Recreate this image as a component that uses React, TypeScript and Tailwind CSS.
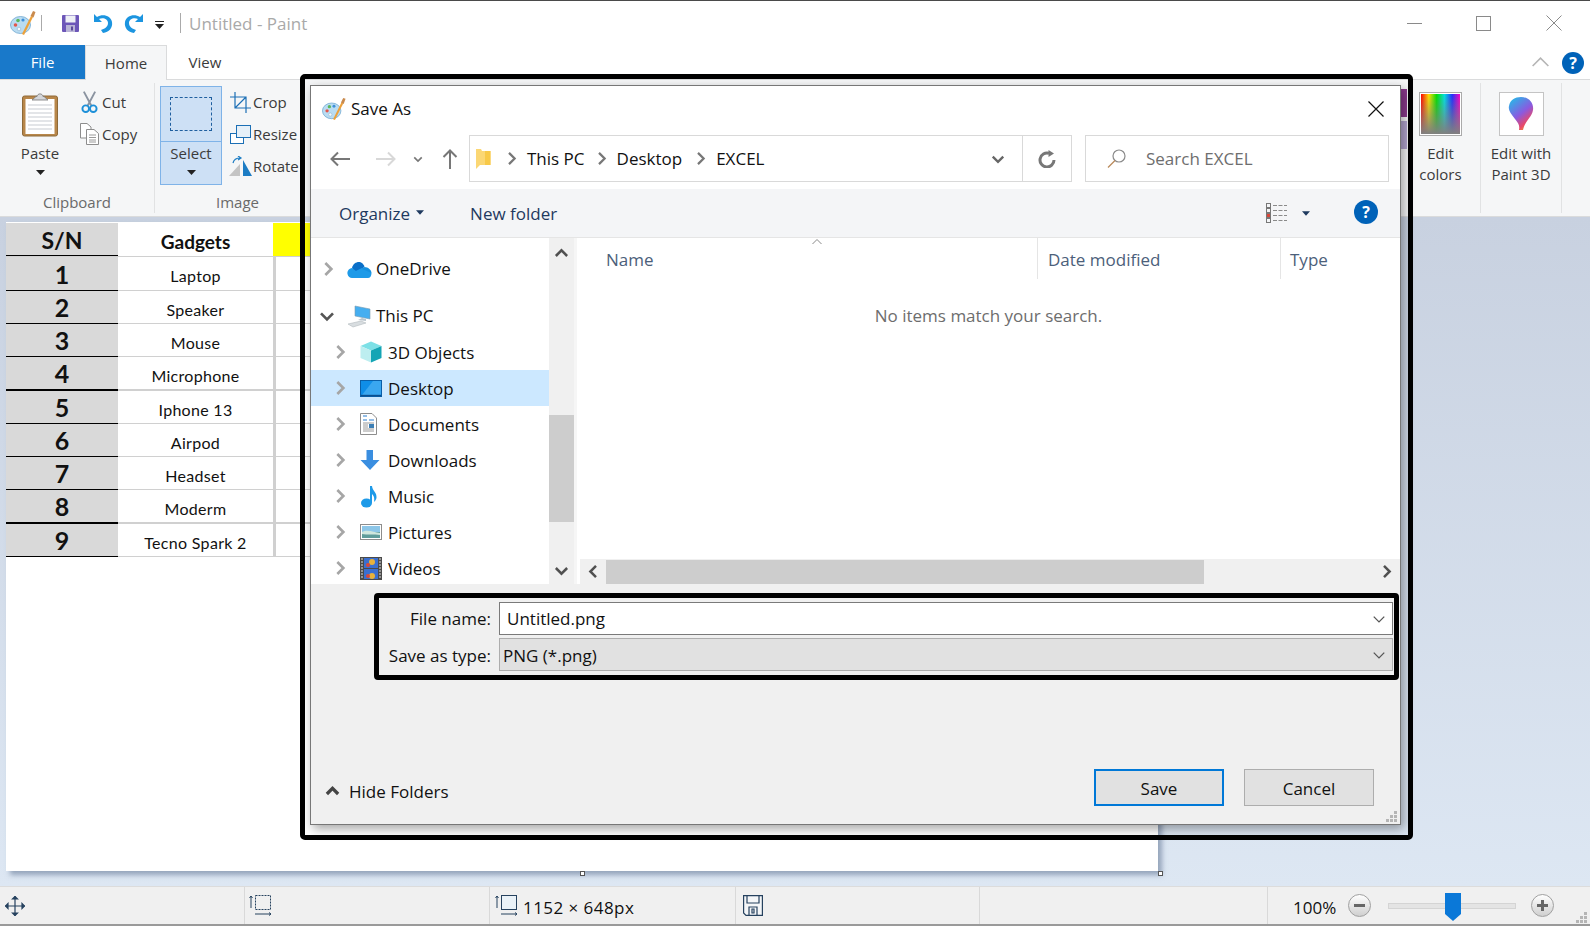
import React from "react";

const Chevron = ({ dir, size = 12, color = "#a6a6a6", width = 2.4 }: { dir: "left" | "right" | "up" | "down"; size?: number; color?: string; width?: number }) => {
  const paths = {
    right: "M4 1.5 L8.5 6 L4 10.5",
    left: "M8 1.5 L3.5 6 L8 10.5",
    up: "M1.5 8 L6 3.5 L10.5 8",
    down: "M1.5 4 L6 8.5 L10.5 4",
  };
  return (
    <svg width={size} height={size} viewBox="0 0 12 12" fill="none" className="shrink-0">
      <path d={paths[dir]} stroke={color} strokeWidth={width} />
    </svg>
  );
};

const Caret = ({ color = "#222", w = 9 }: { color?: string; w?: number }) => (
  <svg width={w} height={5} viewBox="0 0 9 5" className="shrink-0">
    <path d="M0 0 H9 L4.5 5 Z" fill={color} />
  </svg>
);

const Palette = ({ size = 26 }: { size?: number }) => (
  <svg width={size} height={size} viewBox="0 0 26 26" className="shrink-0">
    <ellipse cx="10.5" cy="15" rx="10" ry="8.5" fill="#b9dcf2" stroke="#6ea7cf" strokeWidth="0.8" />
    <circle cx="5.5" cy="15" r="1.8" fill="#e2574c" />
    <circle cx="8" cy="10.5" r="1.8" fill="#5bb85b" />
    <circle cx="13" cy="10" r="1.6" fill="#3e8fd8" />
    <circle cx="9" cy="19" r="1.8" fill="#f4f9fc" stroke="#8fb4cf" strokeWidth="0.6" />
    <path d="M12 24 L21 6 L23 7 L14 25 Z" fill="#eda13a" />
    <path d="M20.5 6 L23 1 L25.5 2 L23.5 7.5 Z" fill="#c98a4d" />
  </svg>
);

const RowIcon3D = () => (
  <svg width="22" height="22" viewBox="0 0 22 22">
    <path d="M11 0.5 L21.5 5 L11 9.5 L0.5 5 Z" fill="#7de0e6" />
    <path d="M0.5 5 L11 9.5 V21.5 L0.5 17 Z" fill="#bdeef0" />
    <path d="M21.5 5 L11 9.5 V21.5 L21.5 17 Z" fill="#14a5b5" />
  </svg>
);

const DesktopIcon = () => (
  <svg width="22" height="17" viewBox="0 0 22 17">
    <rect x="0.5" y="0.5" width="21" height="16" fill="#0f8ee8" stroke="#0a5fa8" />
    <path d="M2 15 L13 1 H21 V15 Z" fill="#3aa7f0" />
    <rect x="1" y="14.8" width="20" height="1.4" fill="#0a4f90" />
  </svg>
);

const DocIcon = () => (
  <svg width="17" height="22" viewBox="0 0 17 22">
    <path d="M0.5 0.5 H12 L16.5 5 V21.5 H0.5 Z" fill="#fff" stroke="#8d8d8d" />
    <path d="M3 3 H7 M3 7 H7 M9 7 H14" stroke="#2a7fd0" strokeWidth="1.2" />
    <path d="M3 10 H14 M3 12 H8 M3 14 H8 M3 16 H14 M3 18 H14" stroke="#9a9a9a" strokeWidth="1" />
    <rect x="9" y="11" width="5" height="4" fill="#3d7fb5" />
  </svg>
);

const DownloadIcon = () => (
  <svg width="20" height="20" viewBox="0 0 20 20">
    <path d="M6.5 0 H13 V10 H19.5 L10 20 L0.5 10 H6.5 Z" fill="#3a8ee0" />
  </svg>
);

const MusicIcon = () => (
  <svg width="18" height="23" viewBox="0 0 18 23">
    <ellipse cx="6.5" cy="18" rx="5.5" ry="4.5" fill="#1e9ae8" />
    <path d="M10 1 H12 C12.5 6 17 7 16.5 13 C16 15 15 16 14 17 C15 12 13 10 12 9 V18 H10 Z" fill="#1e9ae8" />
  </svg>
);

const PicturesIcon = () => (
  <svg width="22" height="16" viewBox="0 0 22 16">
    <rect x="0.5" y="0.5" width="21" height="15" fill="#fff" stroke="#8d8d8d" />
    <rect x="2" y="2" width="18" height="6" fill="#8cc6e8" />
    <rect x="2" y="8" width="18" height="6" fill="#5f9c9a" />
    <path d="M2 8 C7 5 14 8 20 9 V11 C14 10 7 11 2 10 Z" fill="#cfe6dd" />
  </svg>
);

const VideosIcon = () => (
  <svg width="22" height="23" viewBox="0 0 22 23">
    <rect width="22" height="23" fill="#4a4a4a" />
    <rect x="4" y="1" width="14" height="10" fill="#3a6fd0" />
    <rect x="4" y="12" width="14" height="10" fill="#3a6fd0" />
    <circle cx="12" cy="5" r="3" fill="#e8b23a" />
    <circle cx="8" cy="8" r="2" fill="#d8473a" />
    <circle cx="12" cy="19" r="3" fill="#e8b23a" />
    <circle cx="8" cy="19" r="2" fill="#d8473a" />
    <path d="M1 2 H3 M1 5 H3 M1 8 H3 M1 11 H3 M1 14 H3 M1 17 H3 M1 20 H3 M19 2 H21 M19 5 H21 M19 8 H21 M19 11 H21 M19 14 H21 M19 17 H21 M19 20 H21" stroke="#ddd" strokeWidth="1.2" />
  </svg>
);

const OneDriveIcon = () => (
  <svg width="25" height="17" viewBox="0 0 25 17">
    <path d="M5 7 C6 2 11 0 14 1.5 C16 2.5 17 4 17.5 6 L8 12 Z" fill="#0a6fc8" />
    <path d="M17.5 6 C21 6 24.5 9 24.5 12 L13 14 L9 10 Z" fill="#1590df" />
    <path d="M5 7 C2 7.5 0 10 0.5 13 C1 15.5 3 17 5 17 H21 C23 17 24.5 15 24.5 12 L14 7.5 L9 10 Z" fill="#1e9ae8" />
  </svg>
);

const ThisPcIcon = () => (
  <svg width="24" height="23" viewBox="0 0 24 23">
    <path d="M8 1 L23 4 V14 L8 11 Z" fill="#45aef0" stroke="#7c9cb0" strokeWidth="0.6" />
    <path d="M15 13 L19 14 V16 L11 15 Z" fill="#b9c4cc" />
    <path d="M1 19 L14 16 L19 18 L6 22 Z" fill="#d8dde0" stroke="#a8b0b5" strokeWidth="0.5" />
  </svg>
);

const NavRow = ({ icon, label, active }: { icon: React.ReactNode; label: string; active?: boolean }) => (
  <div className={`flex h-[36px] items-center shrink-0 ${active ? "bg-[#cce8ff]" : ""}`}>
    <div className="ml-[21px] w-[28px] flex justify-start">
      <Chevron dir="right" size={16} width={2} />
    </div>
    <div className="w-[28px] flex justify-start">{icon}</div>
    <span className="mt-[1px]">{label}</span>
  </div>
);

const gadgets: [string, string, number, number][] = [
  ["1", "Laptop", 34, 1],
  ["2", "Speaker", 33, 1],
  ["3", "Mouse", 33, 1],
  ["4", "Microphone", 34, 2],
  ["5", "Iphone 13", 33, 1],
  ["6", "Airpod", 33, 1],
  ["7", "Headset", 33, 1],
  ["8", "Moderm", 34, 2],
  ["9", "Tecno Spark 2", 33, 1],
];

const Handle = ({ className }: { className: string }) => (
  <div className={`absolute w-[5px] h-[5px] bg-white border border-[#555] ${className}`} />
);

const SmallCmd = ({ icon, label }: { icon: React.ReactNode; label: string }) => (
  <div className="flex items-center h-[32px]">
    <div className="w-[26px] flex justify-center">{icon}</div>
    <span>{label}</span>
  </div>
);

export default function App() {
  return (
    <div className="relative w-[1590px] h-[926px] overflow-hidden bg-white flex flex-col font-['Open_Sans',sans-serif] text-[#111] text-[17px]">
      {/* title bar */}
      <div className="h-[45px] shrink-0 border-t border-[#4a4a4a] flex items-center">
        <div className="ml-[10px]"><Palette /></div>
        <div className="ml-[5px] w-px h-[16px] bg-[#aaa]" />
        <svg className="ml-[20px]" width="17" height="17" viewBox="0 0 17 17">
          <rect width="17" height="17" rx="1" fill="#6c56b8" />
          <rect x="3.5" y="0.5" width="10" height="7" fill="#eef0f6" />
          <rect x="4" y="10" width="9" height="7" fill="#b9b4d6" />
          <rect x="9" y="11.5" width="2" height="4" fill="#5a4a9a" />
        </svg>
        <svg className="ml-[14px]" width="20" height="21" viewBox="0 0 20 21">
          <path d="M1 1 V9 H9 L6 6 C10 4 15 6 15 10 C15 14 11 16 8 17 L10 20 C16 19 20 15 19 9 C18 3 10 0 4 4 Z" fill="#1c95e0" />
        </svg>
        <svg className="ml-[11px]" width="20" height="21" viewBox="0 0 20 21">
          <path d="M19 1 V9 H11 L14 6 C10 4 5 6 5 10 C5 14 9 16 12 17 L10 20 C4 19 0 15 1 9 C2 3 10 0 16 4 Z" fill="#1c95e0" />
        </svg>
        <div className="ml-[11px] flex flex-col items-center gap-[2px] mt-[4px]">
          <div className="w-[9px] h-px bg-[#222]" />
          <Caret />
        </div>
        <div className="ml-[16px] w-px h-[20px] bg-[#aaa]" />
        <span className="ml-[8px] mt-[1px] text-[#a9a9a9]">Untitled - Paint</span>
        <div className="ml-auto flex items-center">
          <div className="w-[15px] h-px bg-[#8a8a8a] mr-[54px]" />
          <div className="w-[15px] h-[15px] border border-[#8a8a8a] mr-[55px]" />
          <svg className="mr-[28px]" width="16" height="16" viewBox="0 0 16 16">
            <path d="M0.5 0.5 L15.5 15.5 M15.5 0.5 L0.5 15.5" stroke="#8a8a8a" />
          </svg>
        </div>
      </div>

      {/* tabs */}
      <div className="h-[35px] shrink-0 flex relative text-[15px]">
        <div className="w-[85px] h-[34px] bg-[#1979ca] text-white flex items-center justify-center">File</div>
        <div className="w-[82px] h-[35px] bg-[#f5f6f7] border border-b-0 border-[#dadbdc] flex items-center justify-center z-10 text-[#3b3b3b]">Home</div>
        <div className="w-[76px] flex items-center justify-center text-[#3b3b3b]">View</div>
        <div className="ml-auto flex items-center mr-[6px] gap-[11px]">
          <Chevron dir="up" size={21} color="#b5b5b5" width={0.9} />
          <div className="w-[22px] h-[22px] rounded-full bg-[#0062b8] text-white font-bold flex items-center justify-center text-[16px]">?</div>
        </div>
        <div className="absolute left-0 right-0 bottom-0 h-px bg-[#dadbdc]" />
      </div>

      {/* ribbon */}
      <div className="h-[137px] shrink-0 bg-[#f5f6f7] border-b border-[#dadbdc] py-[3px] flex text-[15px] text-[#3b3b3b]">
        <div className="w-[155px] border-r border-[#e1e2e3] flex flex-col">
          <div className="flex flex-1">
            <div className="w-[80px] flex flex-col items-center pt-[10px]">
              <svg width="36" height="44" viewBox="0 0 36 44">
                <rect x="0.5" y="3" width="35" height="40" rx="2" fill="#b8874a" stroke="#8f6a38" />
                <rect x="3.5" y="6" width="29" height="35" fill="#fff" />
                <path d="M6 12 H30 M6 16 H30 M6 20 H30 M6 24 H30 M6 28 H30 M6 32 H30 M6 36 H30" stroke="#c8ccd2" strokeWidth="1.2" />
                <path d="M10 7 L14 3.5 H15 C15.5 0 20.5 0 21 3.5 H22 L26 7 Z" fill="#d4d6da" stroke="#777" strokeWidth="0.8" />
              </svg>
              <span className="mt-[6px] leading-[20px]">Paste</span>
              <div className="mt-[7px]"><Caret /></div>
            </div>
            <div className="pt-[3px] ml-[-4px]">
              <SmallCmd
                icon={
                  <svg width="17" height="23" viewBox="0 0 18 23">
                    <path d="M3 0 L11 15 M15 0 L7 15" stroke="#8a93a0" strokeWidth="2" />
                    <circle cx="5" cy="18" r="3.5" fill="none" stroke="#1c8fd8" strokeWidth="2" />
                    <circle cx="13" cy="18" r="3.5" fill="none" stroke="#1c8fd8" strokeWidth="2" />
                  </svg>
                }
                label="Cut"
              />
              <SmallCmd
                icon={
                  <svg width="19" height="22" viewBox="0 0 19 22">
                    <path d="M0.5 0.5 H7 L11 4 V15 H0.5 Z" fill="#fff" stroke="#8d8d8d" />
                    <path d="M6.5 6.5 H14 L18.5 10.5 V21.5 H6.5 Z" fill="#fff" stroke="#8d8d8d" />
                    <path d="M9 12 H16 M9 14.5 H16 M9 17 H16 M9 19 H16" stroke="#9a9a9a" />
                  </svg>
                }
                label="Copy"
              />
            </div>
          </div>
          <div className="h-[26px] pt-[5px] text-center text-[#6a6a6a] leading-[21px]">Clipboard</div>
        </div>
        <div className="w-[165px] flex flex-col">
          <div className="flex flex-1">
            <div className="ml-[5px] mt-[3px] w-[62px] h-[99px] bg-[#cde0f5] border border-[#7fb3e8] flex flex-col">
              <div className="h-[55px] border-b border-[#7fb3e8] flex items-center justify-center">
                <div className="w-[42px] h-[34px] border border-dashed border-[#1f5f9f]" />
              </div>
              <div className="flex flex-col items-center">
                <span className="leading-[20px] mt-[1px]">Select</span>
                <div className="mt-[7px]"><Caret /></div>
              </div>
            </div>
            <div className="pt-[3px] ml-[5px]">
              <SmallCmd
                icon={
                  <svg width="21" height="21" viewBox="0 0 21 21" fill="none" stroke="#1c6fb5" strokeWidth="1.2">
                    <path d="M5 0 V16 H21 M0 5 H16 V21 M5 16 L16 5" />
                  </svg>
                }
                label="Crop"
              />
              <SmallCmd
                icon={
                  <svg width="21" height="19" viewBox="0 0 21 19">
                    <rect x="0.5" y="8.5" width="13" height="10" fill="#fff" stroke="#1c6fb5" />
                    <rect x="6.5" y="0.5" width="14" height="12" fill="#e6f0f8" stroke="#1c6fb5" />
                  </svg>
                }
                label="Resize"
              />
              <SmallCmd
                icon={
                  <svg width="23" height="21" viewBox="0 0 23 21">
                    <path d="M14 4 L23 20 H14 Z" fill="#1c7cc4" />
                    <path d="M11 8 V20 H0 Z" fill="#c4c4c4" />
                    <path d="M4 7 C5 3 8 2 11 2 M9 0 L12 2 L9 4" fill="none" stroke="#1c7cc4" strokeWidth="1.2" />
                  </svg>
                }
                label="Rotate"
              />
            </div>
          </div>
          <div className="h-[26px] pt-[5px] text-[#6a6a6a] leading-[21px] pl-[61px]">Image</div>
        </div>
        {/* right end of the ribbon */}
        <div className="ml-auto flex">
          <div className="w-[8px] mr-[12px] pt-[6px] flex flex-col gap-[4px]">
            <div className="h-[28px] bg-[#8a3a8c]" />
            <div className="h-[28px] bg-[#b3a6cf]" />
          </div>
          <div className="w-[62px] border-r border-[#e1e2e3] flex flex-col items-center pt-[9px] leading-[21px] text-center">
            <svg className="self-start" width="43" height="44" viewBox="0 0 43 44">
              <defs>
                <linearGradient id="hue" x1="0" x2="1" y1="0" y2="0">
                  <stop offset="0" stopColor="#ff0000" />
                  <stop offset="0.2" stopColor="#ffe000" />
                  <stop offset="0.4" stopColor="#00e000" />
                  <stop offset="0.6" stopColor="#00e0e0" />
                  <stop offset="0.8" stopColor="#2030ff" />
                  <stop offset="1" stopColor="#ff00c0" />
                </linearGradient>
                <linearGradient id="fade" x1="0" x2="0" y1="0" y2="1">
                  <stop offset="0" stopColor="#808080" stopOpacity="0" />
                  <stop offset="1" stopColor="#808080" stopOpacity="1" />
                </linearGradient>
              </defs>
              <rect x="0.5" y="0.5" width="42" height="43" fill="#fff" stroke="#aaa" />
              <rect x="2" y="2" width="39" height="40" fill="url(#hue)" />
              <rect x="2" y="2" width="39" height="40" fill="url(#fade)" />
            </svg>
            <span className="mt-[7px] self-start w-[43px]">Edit colors</span>
          </div>
          <div className="w-[81px] border-r border-[#e1e2e3] flex flex-col items-center pt-[9px] leading-[21px] text-center">
            <svg width="45" height="44" viewBox="0 0 45 44">
              <defs>
                <linearGradient id="ball" x1="0.2" x2="0.8" y1="0" y2="1">
                  <stop offset="0" stopColor="#29b6e8" />
                  <stop offset="0.5" stopColor="#8a5ae0" />
                  <stop offset="0.8" stopColor="#e8486a" />
                  <stop offset="1" stopColor="#f5a623" />
                </linearGradient>
              </defs>
              <rect x="0.5" y="0.5" width="44" height="43" fill="#fff" stroke="#c4c4c4" />
              <path d="M22 5 C30 5 35 11 34 18 C33 25 26 29 24 38 L20 38 C21 33 19 31 16 27 C12 22 9 18 10 14 C11 8 16 5 22 5 Z" fill="url(#ball)" />
            </svg>
            <span className="mt-[7px]">Edit with Paint 3D</span>
          </div>
          <div className="w-[28px]" />
        </div>
      </div>

      {/* canvas area */}
      <div className="relative flex-1 bg-gradient-to-b from-[#c8d1e0] to-[#dde7f3] pl-[6px] pt-[5px]">
        <div className="relative w-[1152px] h-[649px] bg-white shadow-[4px_4px_5px_rgba(100,120,150,0.6)] pt-[1px]">
          <div className="flex h-[34px] border-b border-[#d0d0d0]">
            <div className="w-[112px] bg-[#d9d9d9] border-b border-black text-[23px] font-bold font-['Lato',sans-serif] flex items-center justify-center pt-[3px]">S/N</div>
            <div className="w-[155px] text-[19px] font-bold font-['Lato',sans-serif] flex items-center justify-center pt-[5px]">Gadgets</div>
            <div className="w-[45px] bg-[#ffff00]" />
          </div>
          {gadgets.map(([n, name, h, b]) => (
            <div key={n} className="flex" style={{ height: h }}>
              <div className={`w-[112px] bg-[#d9d9d9] border-black text-[25px] font-bold font-['Lato',sans-serif] flex items-center justify-center pt-[2px] ${b === 2 ? "border-b-2" : "border-b"}`}>{n}</div>
              <div className={`w-[155px] border-[#d0d0d0] text-[16px] tracking-[0.3px] font-['Lato',sans-serif] flex items-center justify-center pt-[5px] ${b === 2 ? "border-b-2" : "border-b"}`}>{name}</div>
              <div className={`w-[45px] border-l-[3px] border-[#d0d0d0] ${b === 2 ? "border-b-2" : "border-b"}`} />
            </div>
          ))}
          <Handle className="left-[574px] bottom-[-5px]" />
          <Handle className="right-[-5px] bottom-[-5px]" />
        </div>
      </div>

      {/* status bar */}
      <div className="h-[40px] shrink-0 bg-[#f0f0f0] border-t border-[#dcdcdc] border-b-2 border-b-[#9a9a9a] flex text-[17px]">
        <div className="w-[245px] border-r border-[#d9d9d9] flex items-center pl-[5px]">
          <svg width="20" height="20" viewBox="0 0 20 20" fill="none" stroke="#26425f" strokeWidth="1.2">
            <path d="M10 0 V20 M0 10 H20" />
            <path d="M7.5 3 L10 0.5 L12.5 3 Z M7.5 17 L10 19.5 L12.5 17 Z M3 7.5 L0.5 10 L3 12.5 Z M17 7.5 L19.5 10 L17 12.5 Z" fill="#26425f" />
          </svg>
        </div>
        <div className="w-[245px] border-r border-[#d9d9d9] flex items-center pl-[4px]">
          <svg width="23" height="21" viewBox="0 0 23 21" fill="none" stroke="#26425f">
            <rect x="6.5" y="0.5" width="15" height="14" strokeDasharray="2 1" />
            <path d="M2 1 V13 M0.5 3 L2 1 L3.5 3 M6 19 H22 M20 17.5 L22 19 L20 20.5" />
          </svg>
        </div>
        <div className="w-[246px] border-r border-[#d9d9d9] flex items-center pl-[5px]">
          <svg width="23" height="21" viewBox="0 0 23 21" fill="none" stroke="#26425f">
            <rect x="6.5" y="0.5" width="15" height="14" fill="#eaf2f8" />
            <path d="M2 1 V13 M0.5 3 L2 1 L3.5 3 M6 19 H22 M20 17.5 L22 19 L20 20.5" />
          </svg>
          <span className="ml-[5px] mt-[4px] tracking-[0.45px]">1152 × 648px</span>
        </div>
        <div className="w-[244px] border-r border-[#d9d9d9] flex items-center pl-[7px]">
          <svg width="20" height="21" viewBox="0 0 20 21" fill="none" stroke="#26425f" strokeWidth="1.2">
            <path d="M0.6 0.6 H19.4 V20.4 H3 L0.6 18 Z" fill="#f4f6f8" />
            <path d="M4 0.6 V8 H16 V0.6 M6 20.4 V12 H14 V20.4 M9 14 H11 V18 H9 Z" />
          </svg>
        </div>
        <div className="w-[288px] border-r border-[#d9d9d9]" />
        <div className="flex-1 flex items-center relative">
          <span className="ml-[25px] mt-[4px]">100%</span>
          <div className="ml-[12px] w-[23px] h-[23px] rounded-full border border-[#a0a0a0] bg-gradient-to-b from-white to-[#cfcfcf] flex items-center justify-center">
            <div className="w-[11px] h-[3px] bg-[#666]" />
          </div>
          <div className="relative ml-[17px] w-[128px] h-[6px] bg-[#e4e4e4] border border-[#d4d4d4]">
            <svg className="absolute left-[56px] top-[-11px]" width="16" height="28" viewBox="0 0 16 28">
              <path d="M0 0 H16 V21 L8 28 L0 21 Z" fill="#0a78d8" />
            </svg>
          </div>
          <div className="ml-[15px] w-[23px] h-[23px] rounded-full border border-[#a0a0a0] bg-gradient-to-b from-white to-[#cfcfcf] flex items-center justify-center relative">
            <div className="w-[11px] h-[3px] bg-[#666]" />
            <div className="absolute w-[3px] h-[11px] bg-[#666]" />
          </div>
          <svg className="absolute right-[2px] bottom-0" width="12" height="12" viewBox="0 0 12 12" fill="#b5b5b5">
            <path d="M8 0h3v3H8zM4 4h3v3H4zM8 4h3v3H8zM0 8h3v3H0zM4 8h3v3H4zM8 8h3v3H8z" />
          </svg>
        </div>
      </div>

      {/* Save As dialog with its black marker outline */}
      <div className="absolute left-[300px] top-[74px] w-[1113px] h-[766px] border-[5px] border-black rounded-[5px] pl-[5px] pt-[6px] pr-[7px] pb-[10px]">
        <div className="w-full h-full border border-[#777] bg-white shadow-[3px_4px_10px_rgba(0,0,0,0.35)] flex flex-col relative">
          <div className="h-[49px] shrink-0 flex items-center pb-[4px]">
            <div className="ml-[11px]"><Palette size={24} /></div>
            <span className="ml-[5px]">Save As</span>
            <svg className="ml-auto mr-[16px]" width="16" height="16" viewBox="0 0 16 16">
              <path d="M0.5 0.5 L15.5 15.5 M15.5 0.5 L0.5 15.5" stroke="#111" strokeWidth="1.2" />
            </svg>
          </div>

          <div className="h-[54px] shrink-0 flex items-start">
            <div className="w-[158px] shrink-0 h-[47px] flex items-center">
              <svg className="ml-[19px]" width="20" height="16" viewBox="0 0 20 16" fill="none" stroke="#777" strokeWidth="2">
                <path d="M20 8 H2 M8 1.5 L1.5 8 L8 14.5" />
              </svg>
              <svg className="ml-[26px]" width="20" height="16" viewBox="0 0 20 16" fill="none" stroke="#d8d8d8" strokeWidth="2">
                <path d="M0 8 H18 M12 1.5 L18.5 8 L12 14.5" />
              </svg>
              <div className="ml-[17px]"><Chevron dir="down" size={10} color="#777" width={2} /></div>
              <svg className="ml-[19px]" width="16" height="20" viewBox="0 0 16 20" fill="none" stroke="#777" strokeWidth="2">
                <path d="M8 20 V2 M1.5 8 L8 1.5 L14.5 8" />
              </svg>
            </div>
            <div className="w-[554px] shrink-0 h-[47px] border border-[#d9d9d9] flex items-center relative">
              <svg className="ml-[6px]" width="15" height="22" viewBox="0 0 15 22">
                <path d="M0 1 H5 L6 3 H14.5 V17 H4 L0 21 Z" fill="#fbd774" />
                <path d="M9 3 H14.5 V17 H9 Z" fill="#f8c948" />
              </svg>
              <div className="ml-[13px]"><Chevron dir="right" size={15} color="#777" width={1.8} /></div>
              <span className="ml-[8px]">This PC</span>
              <div className="ml-[9px]"><Chevron dir="right" size={15} color="#777" width={1.8} /></div>
              <span className="ml-[8px]">Desktop</span>
              <div className="ml-[11px]"><Chevron dir="right" size={15} color="#777" width={1.8} /></div>
              <span className="ml-[8px]">EXCEL</span>
              <div className="ml-auto mr-[17px]"><Chevron dir="down" size={14} color="#666" width={2} /></div>
              <div className="absolute right-[-1px] top-[-1px] bottom-[-1px] w-[50px] border border-[#d9d9d9] flex items-center justify-center translate-x-[49px]">
                <svg width="18" height="18" viewBox="0 0 18 18" fill="none" stroke="#777" strokeWidth="3">
                  <path d="M16 10 A7 7 0 1 1 11 3.3" />
                  <path d="M10.5 0 L16 3.5 L10.5 7 Z" fill="#777" stroke="none" />
                </svg>
              </div>
            </div>
            <div className="ml-[62px] w-[304px] shrink-0 h-[47px] border border-[#d9d9d9] flex items-center">
              <svg className="ml-[21px]" width="19" height="19" viewBox="0 0 19 19" fill="none" stroke="#8a8a8a" strokeWidth="1.2">
                <circle cx="12" cy="7" r="6" />
                <path d="M8 11.5 L1 18.5" stroke="#b98a5a" />
              </svg>
              <span className="ml-[20px] text-[#6e6e6e]">Search EXCEL</span>
            </div>
          </div>

          <div className="h-[49px] shrink-0 bg-[#f4f5f7] border-b border-[#e5e5e5] flex items-center text-[#1f3a5f]">
            <span className="ml-[28px] mt-[2px]">Organize</span>
            <div className="ml-[6px] mb-[2px]"><Caret color="#1f3a5f" w={8} /></div>
            <span className="ml-[46px] mt-[2px]">New folder</span>
            <svg className="ml-auto" width="22" height="21" viewBox="0 0 22 21" fill="none">
              <rect x="0.5" y="0.5" width="4" height="4" stroke="#777" />
              <rect x="0.5" y="5.5" width="4" height="4" stroke="#777" />
              <rect x="0.5" y="10.5" width="4" height="4" fill="#d8473a" stroke="#777" />
              <rect x="0.5" y="15.5" width="4" height="4" stroke="#777" />
              <path d="M7 2.5 H21 M7 7.5 H21 M7 12.5 H21 M7 17.5 H21" stroke="#8a8a8a" strokeDasharray="4 1.5" />
            </svg>
            <div className="ml-[14px]"><Caret color="#1f3a5f" w={8} /></div>
            <div className="ml-[44px] mr-[22px] mb-[2px] w-[24px] h-[24px] rounded-full bg-[#0062b8] text-white font-bold flex items-center justify-center text-[16px]">?</div>
          </div>

          <div className="h-[346px] shrink-0 flex">
            <div className="w-[238px] overflow-hidden flex flex-col pt-[13px]">
              <div className="flex h-[36px] items-center shrink-0">
                <div className="ml-[9px] w-[27px]"><Chevron dir="right" size={16} width={2} /></div>
                <div className="w-[29px]"><OneDriveIcon /></div>
                <span className="mb-[1px]">OneDrive</span>
              </div>
              <div className="h-[11px] shrink-0" />
              <div className="flex h-[36px] items-center shrink-0">
                <div className="ml-[8px] w-[28px]"><Chevron dir="down" size={16} color="#555" width={2} /></div>
                <div className="w-[29px]"><ThisPcIcon /></div>
                <span>This PC</span>
              </div>
              <NavRow icon={<RowIcon3D />} label="3D Objects" />
              <NavRow icon={<DesktopIcon />} label="Desktop" active />
              <NavRow icon={<DocIcon />} label="Documents" />
              <NavRow icon={<DownloadIcon />} label="Downloads" />
              <NavRow icon={<MusicIcon />} label="Music" />
              <NavRow icon={<PicturesIcon />} label="Pictures" />
              <NavRow icon={<VideosIcon />} label="Videos" />
            </div>
            <div className="w-[25px] bg-[#f0f0f0] flex flex-col items-center justify-between pt-[8px] pb-[6px] relative">
              <Chevron dir="up" size={15} color="#505050" width={2} />
              <div className="absolute left-0 right-0 top-[177px] h-[107px] bg-[#cdcdcd]" />
              <Chevron dir="down" size={15} color="#505050" width={2} />
            </div>
            <div className="w-[3px] bg-[#f6f6f6]" />
            <div className="flex-1 flex flex-col relative">
              <div className="absolute left-[234px] top-[-2px]"><Chevron dir="up" size={12} color="#8a8a8a" width={1} /></div>
              <div className="h-[41px] flex text-[#4c607a] pl-[3px]">
                <div className="w-[458px] border-r border-[#e5e5e5] pl-[26px] flex items-center pt-[3px]">Name</div>
                <div className="w-[243px] border-r border-[#e5e5e5] pl-[10px] flex items-center pt-[3px]">Date modified</div>
                <div className="pl-[9px] flex items-center pt-[3px]">Type</div>
              </div>
              <div className="flex-1 flex justify-center pt-[25px] text-[#6d6d6d] leading-[24px]">No items match your search.</div>
              <div className="h-[25px] ml-[3px] bg-[#f0f0f0] flex items-center">
                <div className="w-[26px] flex justify-center"><Chevron dir="left" size={15} color="#505050" width={2} /></div>
                <div className="w-[598px] h-[24px] bg-[#cdcdcd]" />
                <div className="ml-auto mr-[6px]"><Chevron dir="right" size={15} color="#505050" width={2} /></div>
              </div>
            </div>
          </div>

          <div className="flex-1 bg-[#f0f0f0] flex flex-col">
            <div className="ml-[63px] mr-px mt-[9px] h-[87px] border-[5px] border-black rounded-[4px] py-[4px] pr-[1px] flex flex-col gap-[3px]">
              <div className="h-[33px] flex items-center">
                <div className="w-[112px] text-right">File name:</div>
                <div className="ml-[8px] flex-1 h-full bg-white border border-[#7a7a7a] flex items-center pl-[7px] justify-between">
                  <span>Untitled.png</span>
                  <div className="mr-[6px]"><Chevron dir="down" size={14} color="#555" width={1.1} /></div>
                </div>
              </div>
              <div className="h-[33px] flex items-center">
                <div className="w-[112px] text-right pt-[2px]">Save as type:</div>
                <div className="ml-[8px] flex-1 h-full bg-[#e1e1e1] border border-[#adadad] flex items-center pl-[3px] justify-between">
                  <span className="mt-[2px]">PNG (*.png)</span>
                  <div className="mr-[6px]"><Chevron dir="down" size={14} color="#555" width={1.1} /></div>
                </div>
              </div>
            </div>
            <div className="mt-[89px] flex items-start pl-[14px] pr-[26px]">
              <div className="flex items-center mt-[10px]">
                <Chevron dir="up" size={15} color="#444" width={2.6} />
                <span className="ml-[9px]">Hide Folders</span>
              </div>
              <div className="ml-auto w-[130px] h-[37px] bg-[#e1e1e1] border-2 border-[#0078d7] flex items-center justify-center pt-[2px]">Save</div>
              <div className="ml-[20px] w-[130px] h-[37px] bg-[#e1e1e1] border border-[#adadad] flex items-center justify-center pt-[2px]">Cancel</div>
            </div>
          </div>
          <svg className="absolute right-[2px] bottom-[1px]" width="12" height="12" viewBox="0 0 12 12" fill="#b5b5b5">
            <path d="M8 0h3v3H8zM4 4h3v3H4zM8 4h3v3H8zM0 8h3v3H0zM4 8h3v3H4zM8 8h3v3H8z" />
          </svg>
        </div>
      </div>
    </div>
  );
}
